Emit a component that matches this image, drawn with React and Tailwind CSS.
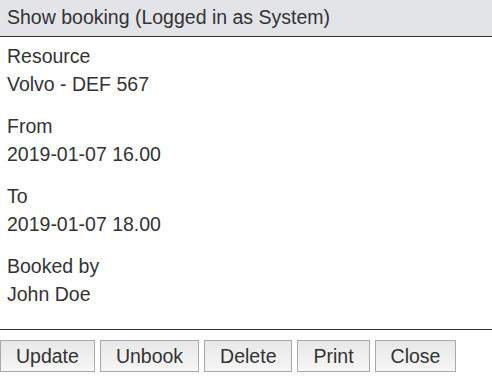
export default function App() {
  const rows = [
    ["Resource", "Volvo - DEF 567"],
    ["From", "2019-01-07 16.00"],
    ["To", "2019-01-07 18.00"],
    ["Booked by", "John Doe"],
  ];
  const buttons = ["Update", "Unbook", "Delete", "Print", "Close"];
  return (
    <div
      className="w-[492px] h-[385px] bg-white text-[#333] text-[19.5px]"
      style={{ fontFamily: '"Liberation Sans", Arial, sans-serif' }}
    >
      <div className="h-[37px] bg-[#e3e4e8] border-b border-[#333] pl-[7px] leading-[35px]">
        Show booking (Logged in as System)
      </div>
      <div className="h-[292px] pl-[7px] pt-[6px] flex flex-col gap-[15px]">
        {rows.map(([l, v]) => (
          <div key={l} className="leading-[27.5px]">
            <div>{l}</div>
            <div>{v}</div>
          </div>
        ))}
      </div>
      <div className="border-t border-[#333] pt-[10px] flex gap-[5px]">
        {buttons.map((b) => (
          <button
            key={b}
            className="h-[32px] px-[15px] border border-[#aaa] bg-gradient-to-b from-[#e8e8e8] to-[#f6f6f6] text-[19.5px] leading-[30px] text-[#333]"
          >
            {b}
          </button>
        ))}
      </div>
    </div>
  );
}
